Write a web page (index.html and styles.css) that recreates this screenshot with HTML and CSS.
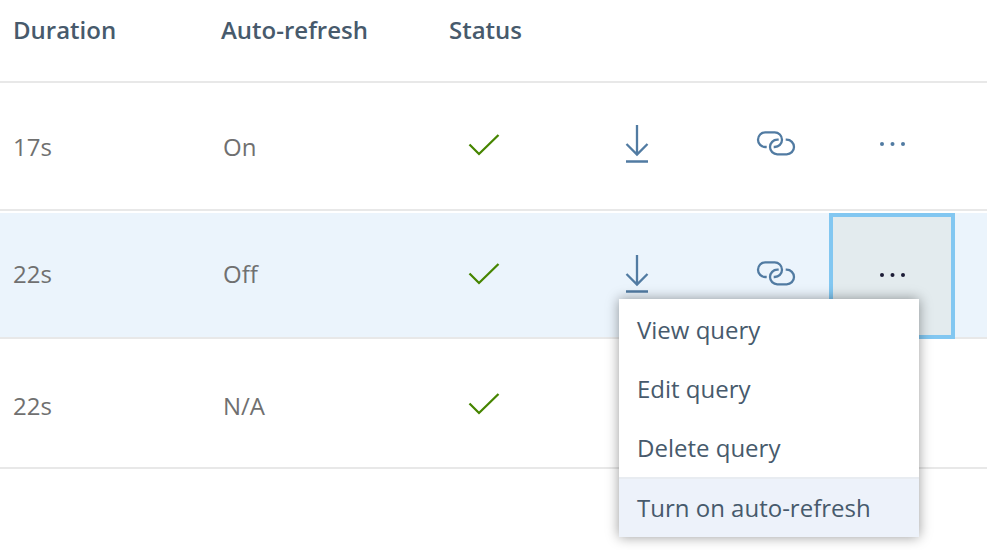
FILE: index.html
```html
<!DOCTYPE html>
<html lang="en">
<head>
<meta charset="utf-8">
<title>Queries</title>
<link rel="stylesheet" href="styles.css">
</head>
<body>
<svg class="sprite" aria-hidden="true">
  <symbol id="check" viewBox="0 0 32 24"><path d="M1.500 11.500 11 21 30.500 2" /></symbol>
  <symbol id="download" viewBox="0 0 24 40"><path d="M12 1V31M1.500 20 12 30.500 22.500 20M1 37.500H23" /></symbol>
  <symbol id="link" viewBox="0 0 40 26"><path d="M10.700 16H9.300A7.300 7.300 0 0 1 9.300 1.400H18.700A7.300 7.300 0 0 1 18.700 16H17.700M22.700 8.700H21.300A7.300 7.300 0 0 0 21.300 23.300H30.700A7.300 7.300 0 0 0 30.700 8.700H29.700" /></symbol>
  <symbol id="more" viewBox="0 0 28 6"><circle cx="4" cy="3" r="2"/><circle cx="14.500" cy="3" r="2"/><circle cx="25" cy="3" r="2"/></symbol>
</svg>
<main class="page">
  <table class="queries">
    <colgroup>
      <col class="col-duration"><col class="col-refresh"><col class="col-status"><col class="col-download"><col class="col-link"><col class="col-more"><col class="col-end">
    </colgroup>
    <thead>
      <tr>
        <th scope="col">Duration</th><th scope="col">Auto-refresh</th><th scope="col">Status</th><td></td><td></td><td></td><td></td>
      </tr>
    </thead>
    <tbody>
      <tr>
        <td class="value">17s</td>
        <td class="value value-refresh">On</td>
        <td class="status"><svg class="check" role="img" aria-label="Succeeded"><use href="#check"/></svg></td>
        <td class="action"><button class="icon-button" aria-label="Download"><svg class="download"><use href="#download"/></svg></button></td>
        <td class="action"><button class="icon-button" aria-label="Copy link"><svg class="link"><use href="#link"/></svg></button></td>
        <td class="action"><button class="icon-button" aria-label="More"><svg class="more"><use href="#more"/></svg></button></td>
        <td></td>
      </tr>
      <tr class="selected">
        <td class="value">22s</td>
        <td class="value value-refresh">Off</td>
        <td class="status"><svg class="check" role="img" aria-label="Succeeded"><use href="#check"/></svg></td>
        <td class="action"><button class="icon-button" aria-label="Download"><svg class="download"><use href="#download"/></svg></button></td>
        <td class="action"><button class="icon-button" aria-label="Copy link"><svg class="link"><use href="#link"/></svg></button></td>
        <td class="action menu-cell">
          <button class="icon-button menu-button" aria-label="More" aria-expanded="true"><svg class="more"><use href="#more"/></svg></button>
          <div class="menu" role="menu">
            <button class="menu-item" role="menuitem">View query</button>
            <button class="menu-item" role="menuitem">Edit query</button>
            <button class="menu-item" role="menuitem">Delete query</button>
            <button class="menu-item menu-item-active" role="menuitem">Turn on auto-refresh</button>
          </div>
        </td>
        <td></td>
      </tr>
      <tr class="last">
        <td class="value">22s</td>
        <td class="value value-refresh">N/A</td>
        <td class="status"><svg class="check" role="img" aria-label="Succeeded"><use href="#check"/></svg></td>
        <td></td><td></td><td></td><td></td>
      </tr>
    </tbody>
  </table>
</main>
</body>
</html>
```
FILE: styles.css
```css
* { box-sizing: border-box; }

body {
  margin: 0;
  background: #fff;
  color: #475a6c;
  font-family: "Segoe UI", "Open Sans", "Noto Sans", sans-serif;
  font-size: 24px;
  line-height: 32px;
}

.sprite { position: absolute; width: 0; height: 0; }

.page {
  min-height: 100vh;
  padding-right: 18px;
}

.queries {
  width: 100%;
  table-layout: fixed;
  border-collapse: separate;
  border-spacing: 0;
}

.col-duration { width: 208px; }
.col-refresh { width: 228px; }
.col-status { width: 115px; }
.col-download { width: 172px; }
.col-link { width: 106px; }
.col-more { width: 126px; }
.col-end { width: 32px; }

th, td {
  padding: 0;
  text-align: left;
  vertical-align: middle;
  box-shadow: inset 0 -2px #e8e8e8;
}

thead th, thead td { height: 83px; }
th { padding: 0 0 24px 13px; font-weight: 600; }

tbody td { height: 128px; }
.last td { height: 130px; }

.value { padding: 0 0 0 13px; color: #707070; }
.value-refresh { padding-left: 15px; }
.selected .value { padding-bottom: 4px; }
.last .value { padding-top: 4px; }

.status { padding: 0 0 4px 32px; }
.action { padding-bottom: 6px; text-align: center; }
.selected .action { padding-bottom: 4px; }
.last .status { padding-bottom: 0; }

.selected td {
  border-top: 2px solid #fff;
  background: #ebf4fc;
  background-clip: padding-box;
}

svg {
  display: block;
  fill: none;
  stroke: #517ba2;
  stroke-width: 2.300;
}

.check { width: 32px; height: 24px; stroke: #468500; }
.download { width: 24px; height: 40px; }
.link { width: 40px; height: 26px; }
.more { width: 28px; height: 6px; fill: #517ba2; stroke: none; }

button {
  border: 0;
  background: none;
  color: inherit;
  font: inherit;
  cursor: pointer;
}

.icon-button {
  display: flex;
  align-items: center;
  justify-content: center;
  margin: 0 auto;
  padding: 0;
}

.selected .menu-cell { position: relative; padding: 0; }

.menu-button {
  width: 100%;
  height: 126px;
  padding-bottom: 2px;
  border: 4px solid #82c7f1;
  background: #e3ebee;
}
.menu-button .more { fill: #1c1c36; }

.menu {
  position: absolute;
  z-index: 1;
  top: 86px;
  right: 36px;
  width: 300px;
  padding-top: 1px;
  background: #fff;
  box-shadow: 0 0 12px rgba(0, 0, 0, 0.4);
}

.menu-item {
  display: block;
  width: 100%;
  height: 59px;
  padding: 0 18px;
  text-align: left;
}

.menu-item-active {
  height: 60px;
  border-top: 2px solid #e8ecf1;
  background: #edf2fa;
}
```
